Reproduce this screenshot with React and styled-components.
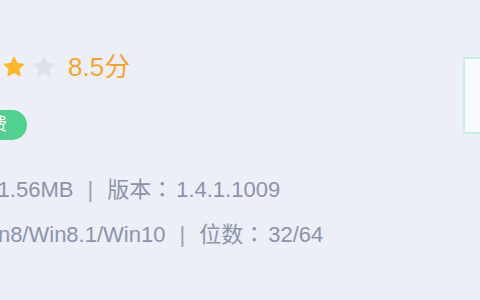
import React from "react";
import styled, { createGlobalStyle } from "styled-components";

const GlobalStyle = createGlobalStyle`
  html, body {
    margin: 0;
    padding: 0;
    background: #eceff8;
    overflow: hidden;
  }
  body {
    font-family: "Liberation Sans", "Noto Sans CJK SC", sans-serif;
  }
`;

const Page = styled.div`
  width: 480px;
  height: 300px;
  display: flex;
  justify-content: space-between;
  align-items: flex-start;
  overflow: hidden;
`;

const Info = styled.div`
  display: flex;
  flex-direction: column;
  padding-top: 52px;
`;

const RatingRow = styled.div`
  display: flex;
  align-items: center;
  height: 30px;
  margin-left: ${(p) => p.$shift}px;
`;

const Stars = styled.div`
  display: flex;
  gap: 8px;
`;

const Score = styled.span`
  margin-left: 13px;
  font-size: 26px;
  color: #f6a431;
  line-height: 30px;
`;

const TagRow = styled.div`
  display: flex;
  margin-top: 28px;
  margin-left: ${(p) => p.$shift}px;
`;

const Tag = styled.span`
  height: 30px;
  line-height: 30px;
  padding: 0 20px;
  border-radius: 15px;
  background: #52d08f;
  color: #fff;
  font-size: 17px;
`;

const Line = styled.div`
  margin-top: ${(p) => p.$top}px;
  margin-left: ${(p) => p.$shift}px;
  font-size: 22px;
  line-height: 30px;
  color: #8d94a8;
  white-space: nowrap;
`;

const Label = styled.span`
  font-family: "Noto Sans CJK TC", sans-serif;
  line-height: 1;
  padding-right: 3px;
`;

const Sep = styled.span`
  margin: 0 14px;
  color: #9a9ea8;
`;

const Preview = styled.div`
  margin-top: 57px;
  margin-right: -103px;
  width: 120px;
  height: 77px;
  box-sizing: border-box;
  border: 2px solid #c9efdf;
  background: #f9fafd;
  flex-shrink: 0;
`;

const Star = ({ on }) => (
  <svg width="22" height="22" viewBox="0 0 24 24">
    <path
      d="M12 1.5l3.2 6.6 7.2 1-5.2 5.1 1.3 7.2L12 18l-6.5 3.4 1.3-7.2L1.6 9.1l7.2-1z"
      fill={on ? "#fdb72e" : "#dde0e8"}
      stroke={on ? "#fdb72e" : "#dde0e8"}
      strokeWidth="1.5"
      strokeLinejoin="round"
    />
  </svg>
);

export default function App() {
  return (
    <Page>
      <GlobalStyle />
      <Info>
        <RatingRow $shift={-87}>
          <Stars>
            {[1, 2, 3, 4, 5].map((i) => (
              <Star key={i} on={i <= 4} />
            ))}
          </Stars>
          <Score>8.5分</Score>
        </RatingRow>
        <TagRow $shift={-47}>
          <Tag>免费</Tag>
        </TagRow>
        <Line $top={35} $shift={-82}>
          <Label>大小：</Label>11.56MB<Sep>|</Sep>
          <Label>版本：</Label>1.4.1.1009
        </Line>
        <Line $top={15} $shift={-153}>
          <Label>系统：</Label>Win7/Win8/Win8.1/Win10<Sep>|</Sep>
          <Label>位数：</Label>32/64
        </Line>
      </Info>
      <Preview />
    </Page>
  );
}
